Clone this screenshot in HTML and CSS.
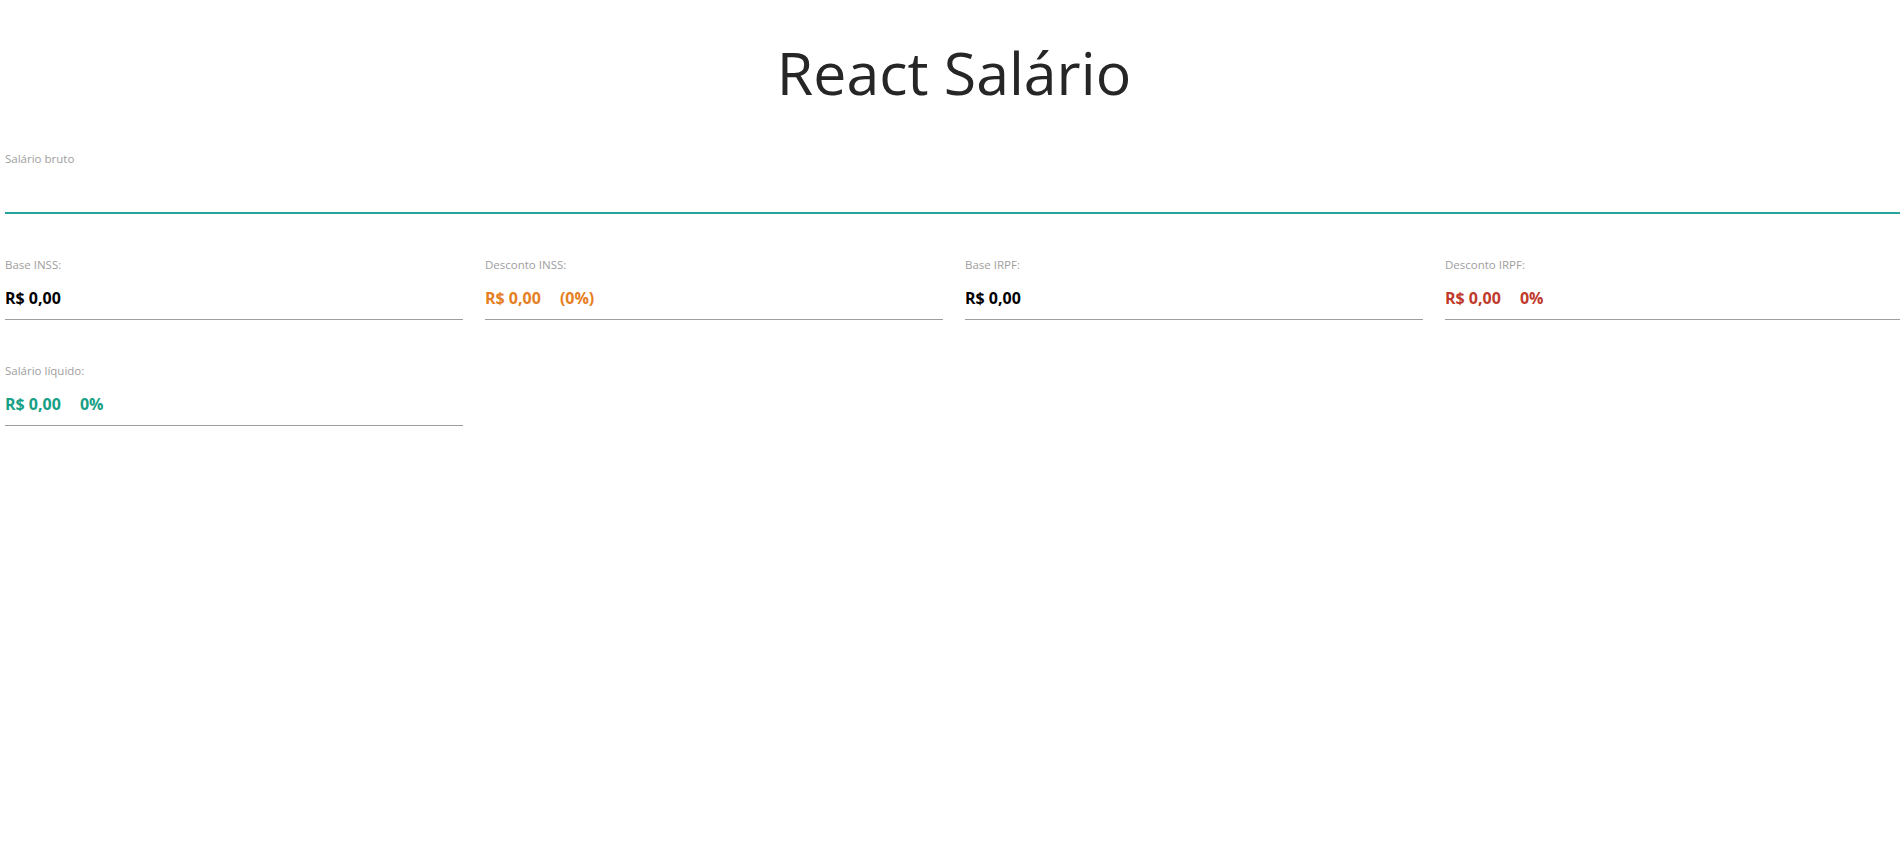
FILE: index.html
```html
<!DOCTYPE html>
<html lang="pt-BR">
<head>
<meta charset="utf-8">
<title>React Salário</title>
<link rel="stylesheet" href="styles.css">
</head>
<body>
<div class="container">
  <h1 class="title">React Salário</h1>

  <div class="input-field">
    <label class="label" for="bruto">Salário bruto</label>
    <input id="bruto" class="input" type="text">
  </div>

  <div class="grid">
    <div class="field">
      <div class="label">Base INSS:</div>
      <div class="value">R$ 0,00</div>
    </div>
    <div class="field">
      <div class="label">Desconto INSS:</div>
      <div class="value orange">R$ 0,00<span class="pct">(0%)</span></div>
    </div>
    <div class="field">
      <div class="label">Base IRPF:</div>
      <div class="value">R$ 0,00</div>
    </div>
    <div class="field">
      <div class="label">Desconto IRPF:</div>
      <div class="value red">R$ 0,00<span class="pct">0%</span></div>
    </div>
    <div class="field">
      <div class="label">Salário líquido:</div>
      <div class="value green">R$ 0,00<span class="pct">0%</span></div>
    </div>
  </div>
</div>
</body>
</html>
```

FILE: styles.css
```css
html {
  overflow-x: hidden;
}
body {
  margin: 0;
  background: #ffffff;
  font-family: "Open Sans", "Noto Sans", sans-serif;
}
.container {
  width: 1898px;
  margin-left: 5px;
}
.title {
  margin: 0;
  padding-top: 37px;
  font-size: 59px;
  line-height: 70px;
  font-weight: 400;
  color: #262626;
  text-align: center;
}
.input-field {
  margin-top: 44px;
  display: flex;
  flex-direction: column;
}
.label {
  font-size: 11.5px;
  line-height: 16px;
  color: #9e9e9e;
}
.input {
  display: block;
  box-sizing: border-box;
  width: 100%;
  height: 46px;
  margin: 0;
  padding: 0;
  border: none;
  border-bottom: 1px solid #26a69a;
  box-shadow: 0 1px 0 0 #26a69a;
  outline: none;
  background: transparent;
  font-family: inherit;
  font-size: 16px;
}
.grid {
  display: grid;
  grid-template-columns: repeat(4, 458px);
  column-gap: 22px;
  row-gap: 43px;
  margin-top: 44px;
}
.field {
  display: flex;
  flex-direction: column;
}
.value {
  margin-top: 13px;
  font-size: 16px;
  line-height: 24px;
  font-weight: 700;
  color: #000000;
  padding-bottom: 9px;
  border-bottom: 1px solid #9e9e9e;
}
.pct {
  margin-left: 19px;
}
.orange { color: #e67e22; }
.red { color: #c0392b; }
.green { color: #16a085; }
```
